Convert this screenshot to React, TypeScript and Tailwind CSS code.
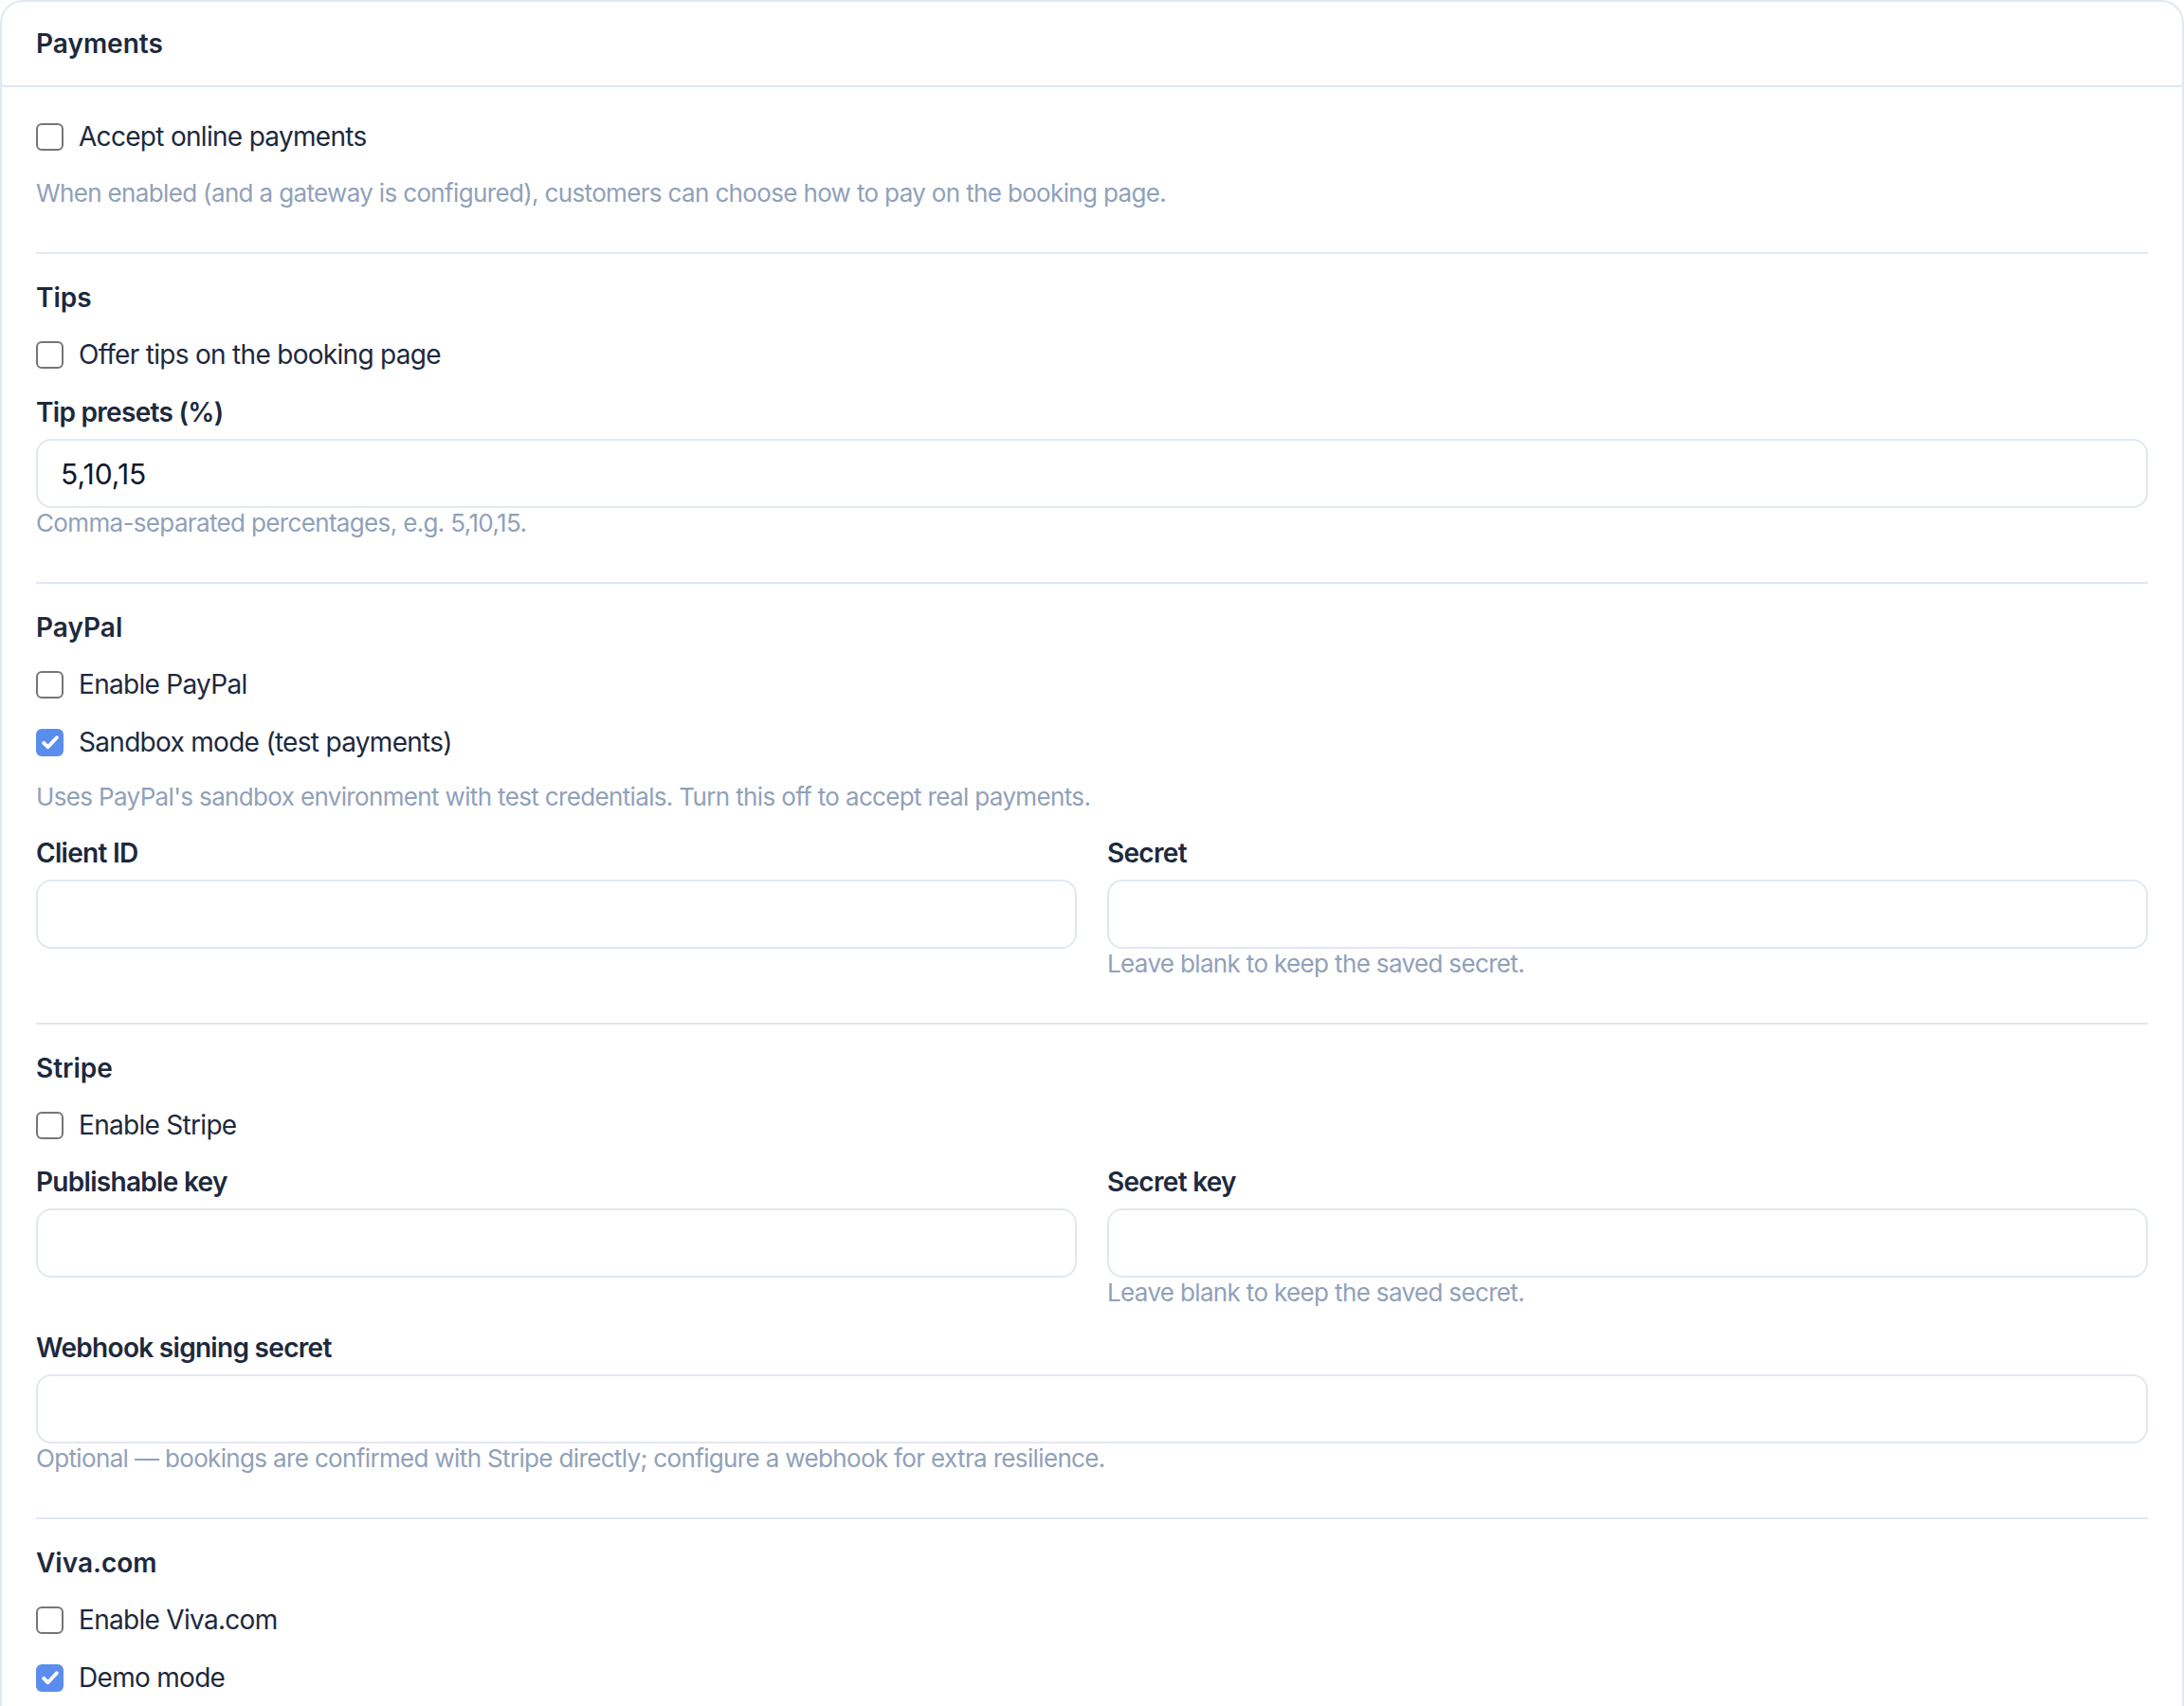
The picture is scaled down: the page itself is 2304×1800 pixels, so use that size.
import type { ReactNode } from "react";

function Checkbox({ label, checked = false, className = "" }: { label: string; checked?: boolean; className?: string }) {
  return (
    <label className={`flex h-5 items-center gap-2 text-sm tracking-[-0.025em] text-slate-800 ${className}`}>
      {checked ? (
        <span className="flex h-[14.5px] w-[14.5px] shrink-0 items-center justify-center rounded-[3px] bg-[#5b8def]">
          <svg viewBox="0 0 16 16" className="h-[11px] w-[11px]" fill="none" stroke="white" strokeWidth={2.8} strokeLinecap="round" strokeLinejoin="round">
            <path d="M3 8.6l3.2 3.2L13 4.5" />
          </svg>
        </span>
      ) : (
        <span className="h-[14.5px] w-[14.5px] shrink-0 rounded-[3px] border border-[#767676] bg-white" />
      )}
      {label}
    </label>
  );
}

function Heading({ children }: { children: ReactNode }) {
  return <h3 className="mt-[11px] text-sm font-semibold leading-6 text-slate-800">{children}</h3>;
}

function Help({ children, className = "" }: { children: ReactNode; className?: string }) {
  return <p className={`text-[13px] leading-4 tracking-[-0.025em] text-slate-400 ${className}`}>{children}</p>;
}

function Field({ label, value = "", help }: { label: string; value?: string; help?: string }) {
  return (
    <div>
      <div className="text-sm font-semibold leading-5 tracking-[-0.025em] text-slate-800">{label}</div>
      <input
        readOnly
        defaultValue={value}
        className="mt-1 block h-[36.5px] w-full rounded-lg border border-slate-200 bg-white px-3 text-[15px] text-slate-900 outline-none"
      />
      {help && <Help>{help}</Help>}
    </div>
  );
}

function Divider() {
  return <div className="mt-[23px] h-px bg-slate-200" />;
}

export default function App() {
  return (
    <div className="bg-white font-['Inter',sans-serif] [zoom:2]">
      <div className="rounded-xl border border-slate-200 bg-white">
        <div className="border-b border-slate-200 px-[18px] py-2.5">
          <h2 className="text-sm font-semibold leading-6 text-slate-800">Payments</h2>
        </div>

        <div className="px-[18px] pt-4 pb-8">
          <Checkbox label="Accept online payments" />
          <Help className="mt-3">
            When enabled (and a gateway is configured), customers can choose how to pay on the booking page.
          </Help>
          <Divider />

          <Heading>Tips</Heading>
          <Checkbox className="mt-2" label="Offer tips on the booking page" />
          <div className="mt-[10.5px]">
            <Field label="Tip presets (%)" value="5,10,15" help="Comma-separated percentages, e.g. 5,10,15." />
          </div>
          <Divider />

          <Heading>PayPal</Heading>
          <Checkbox className="mt-2" label="Enable PayPal" />
          <Checkbox className="mt-[10.5px]" label="Sandbox mode (test payments)" checked />
          <Help className="mt-[11px]">
            Uses PayPal's sandbox environment with test credentials. Turn this off to accept real payments.
          </Help>
          <div className="mt-[11.5px] grid grid-cols-2 gap-x-4">
            <Field label="Client ID" />
            <Field label="Secret" help="Leave blank to keep the saved secret." />
          </div>
          <Divider />

          <Heading>Stripe</Heading>
          <Checkbox className="mt-2" label="Enable Stripe" />
          <div className="mt-2.5 grid grid-cols-2 gap-x-4">
            <Field label="Publishable key" />
            <Field label="Secret key" help="Leave blank to keep the saved secret." />
          </div>
          <div className="mt-[11px]">
            <Field
              label="Webhook signing secret"
              help="Optional — bookings are confirmed with Stripe directly; configure a webhook for extra resilience."
            />
          </div>
          <Divider />

          <Heading>Viva.com</Heading>
          <Checkbox className="mt-2" label="Enable Viva.com" />
          <Checkbox className="mt-[10.5px]" label="Demo mode" checked />
        </div>
      </div>
    </div>
  );
}
